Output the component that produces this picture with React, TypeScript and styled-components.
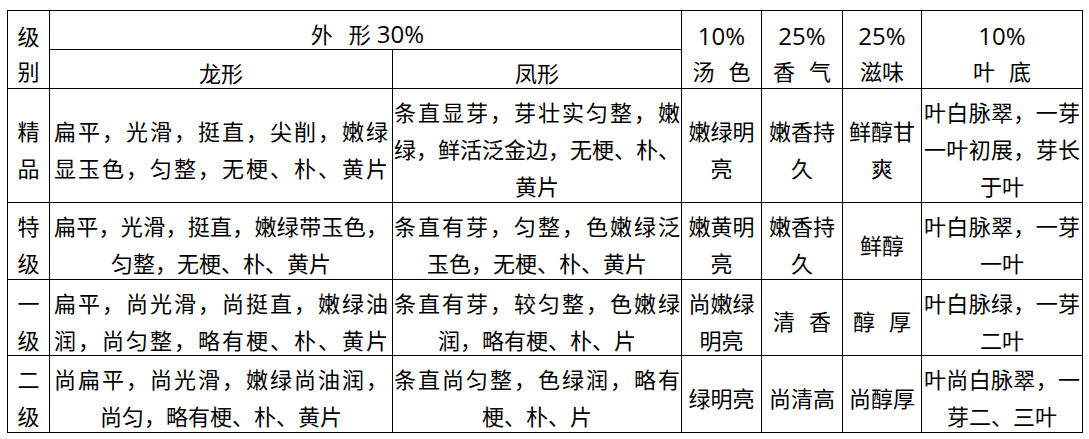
import styled, { createGlobalStyle } from "styled-components";

type Line = { text: string; full?: boolean };

interface GradeRow {
  grade: string[];
  longShape: Line[];
  fengShape: Line[];
  soup: string[];
  aroma: string[];
  taste: string[];
  leaf: Line[];
}

const rows: GradeRow[] = [
  {
    grade: ["精", "品"],
    longShape: [
      { text: "扁平，光滑，挺直，尖削，嫩绿", full: true },
      { text: "显玉色，匀整，无梗、朴、黄片", full: true },
    ],
    fengShape: [
      { text: "条直显芽，芽壮实匀整，嫩", full: true },
      { text: "绿，鲜活泛金边，无梗、朴、", full: true },
      { text: "黄片" },
    ],
    soup: ["嫩绿明", "亮"],
    aroma: ["嫩香持", "久"],
    taste: ["鲜醇甘", "爽"],
    leaf: [
      { text: "叶白脉翠，一芽", full: true },
      { text: "一叶初展，芽长", full: true },
      { text: "于叶" },
    ],
  },
  {
    grade: ["特", "级"],
    longShape: [
      { text: "扁平，光滑，挺直，嫩绿带玉色，", full: true },
      { text: "匀整，无梗、朴、黄片" },
    ],
    fengShape: [
      { text: "条直有芽，匀整，色嫩绿泛", full: true },
      { text: "玉色，无梗、朴、黄片" },
    ],
    soup: ["嫩黄明", "亮"],
    aroma: ["嫩香持", "久"],
    taste: ["鲜醇"],
    leaf: [{ text: "叶白脉翠，一芽", full: true }, { text: "一叶" }],
  },
  {
    grade: ["一", "级"],
    longShape: [
      { text: "扁平，尚光滑，尚挺直，嫩绿油", full: true },
      { text: "润，尚匀整，略有梗、朴、黄片", full: true },
    ],
    fengShape: [
      { text: "条直有芽，较匀整，色嫩绿", full: true },
      { text: "润，略有梗、朴、片" },
    ],
    soup: ["尚嫩绿", "明亮"],
    aroma: ["清 香"],
    taste: ["醇 厚"],
    leaf: [{ text: "叶白脉绿，一芽", full: true }, { text: "二叶" }],
  },
  {
    grade: ["二", "级"],
    longShape: [
      { text: "尚扁平，尚光滑，嫩绿尚油润，", full: true },
      { text: "尚匀，略有梗、朴、黄片" },
    ],
    fengShape: [
      { text: "条直尚匀整，色绿润，略有", full: true },
      { text: "梗、朴、片" },
    ],
    soup: ["绿明亮"],
    aroma: ["尚清高"],
    taste: ["尚醇厚"],
    leaf: [{ text: "叶尚白脉翠，一", full: true }, { text: "芽二、三叶" }],
  },
];

const headers = [
  { percent: "10%", name: "汤 色" },
  { percent: "25%", name: "香 气" },
  { percent: "25%", name: "滋味" },
  { percent: "10%", name: "叶 底" },
];

const GlobalStyle = createGlobalStyle`
  html, body {
    margin: 0;
    background: #ffffff;
  }
  body {
    padding: 10px 0 0 7px;
    font-family: "Noto Sans CJK SC", "Noto Sans", sans-serif;
    color: #000000;
  }
`;

const Table = styled.div`
  display: grid;
  grid-template-columns: 41px 342px 288px 79px 80px 78px 160px;
  grid-template-rows: 38px 38px 113px 76px 75px 76px;
  gap: 1px;
  padding: 1px;
  width: 1076px;
  box-sizing: border-box;
  background: #000000;
`;

const Cell = styled.div<{ $pad?: number; $rowSpan?: number; $colSpan?: number }>`
  grid-row: span ${({ $rowSpan }) => $rowSpan ?? 1};
  grid-column: span ${({ $colSpan }) => $colSpan ?? 1};
  display: flex;
  flex-direction: column;
  justify-content: center;
  background: #ffffff;
  padding: 6px ${({ $pad }) => $pad ?? 0}px 0;
  font-size: 22px;
  line-height: 37px;
  text-align: center;
  word-spacing: 9px;
  overflow: visible;
`;

const HeadLine = styled.div`
  line-height: 35px;
`;

const Percent = styled.div`
  font-family: "Open Sans", "Liberation Sans", sans-serif;
  font-size: 24px;
  line-height: 35px;
`;

const Title = styled.div`
  display: flex;
  justify-content: center;
  align-items: baseline;
  line-height: 35px;
  padding-left: 4px;
`;

const TitleWord = styled.span<{ $gap: number }>`
  margin-left: ${({ $gap }) => $gap}px;
`;

const TitleNumber = styled.span`
  margin-left: 6px;
  font-family: "Open Sans", "Liberation Sans", sans-serif;
  font-size: 24px;
`;

const TextLine = styled.div<{ $full?: boolean }>`
  white-space: nowrap;
  text-align: ${({ $full }) => ($full ? "justify" : "center")};
  text-align-last: ${({ $full }) => ($full ? "justify" : "center")};
  text-justify: inter-character;
`;

const Lines = ({ lines }: { lines: Line[] }) => (
  <>
    {lines.map((l, i) => (
      <TextLine key={i} $full={l.full}>
        {l.text}
      </TextLine>
    ))}
  </>
);

const Plain = ({ lines }: { lines: string[] }) => (
  <>
    {lines.map((t, i) => (
      <TextLine key={i}>{t}</TextLine>
    ))}
  </>
);

const Row = ({ row }: { row: GradeRow }) => (
  <>
    <Cell>
      <Plain lines={row.grade} />
    </Cell>
    <Cell $pad={4}>
      <Lines lines={row.longShape} />
    </Cell>
    <Cell $pad={1}>
      <Lines lines={row.fengShape} />
    </Cell>
    <Cell>
      <Plain lines={row.soup} />
    </Cell>
    <Cell>
      <Plain lines={row.aroma} />
    </Cell>
    <Cell>
      <Plain lines={row.taste} />
    </Cell>
    <Cell $pad={2}>
      <Lines lines={row.leaf} />
    </Cell>
  </>
);

const App = () => {
  return (
    <>
      <GlobalStyle />
      <Table>
        <Cell $rowSpan={2}>
          <HeadLine>级</HeadLine>
          <HeadLine>别</HeadLine>
        </Cell>
        <Cell $colSpan={2}>
          <Title>
            <TitleWord $gap={0}>外</TitleWord>
            <TitleWord $gap={16}>形</TitleWord>
            <TitleNumber>30%</TitleNumber>
          </Title>
        </Cell>
        {headers.map((h, i) => (
          <Cell key={i} $rowSpan={2}>
            <Percent>{h.percent}</Percent>
            <HeadLine>{h.name}</HeadLine>
          </Cell>
        ))}
        <Cell>
          <HeadLine>龙形</HeadLine>
        </Cell>
        <Cell>
          <HeadLine>凤形</HeadLine>
        </Cell>

        {rows.map((r, i) => (
          <Row key={i} row={r} />
        ))}
      </Table>
    </>
  );
};

export default App;
